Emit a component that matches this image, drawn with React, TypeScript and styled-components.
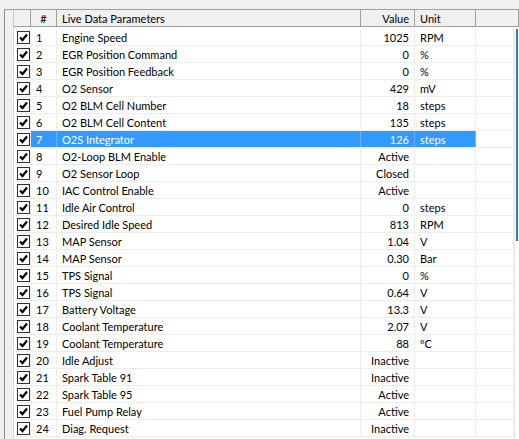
import styled, { createGlobalStyle } from "styled-components";

interface Param {
  name: string;
  value: string;
  unit?: string;
}

const params: Param[] = [
  { name: "Engine Speed", value: "1025", unit: "RPM" },
  { name: "EGR Position Command", value: "0", unit: "%" },
  { name: "EGR Position Feedback", value: "0", unit: "%" },
  { name: "O2 Sensor", value: "429", unit: "mV" },
  { name: "O2 BLM Cell Number", value: "18", unit: "steps" },
  { name: "O2 BLM Cell Content", value: "135", unit: "steps" },
  { name: "O2S Integrator", value: "126", unit: "steps" },
  { name: "O2-Loop BLM Enable", value: "Active" },
  { name: "O2 Sensor Loop", value: "Closed" },
  { name: "IAC Control Enable", value: "Active" },
  { name: "Idle Air Control", value: "0", unit: "steps" },
  { name: "Desired Idle Speed", value: "813", unit: "RPM" },
  { name: "MAP Sensor", value: "1.04", unit: "V" },
  { name: "MAP Sensor", value: "0.30", unit: "Bar" },
  { name: "TPS Signal", value: "0", unit: "%" },
  { name: "TPS Signal", value: "0.64", unit: "V" },
  { name: "Battery Voltage", value: "13.3", unit: "V" },
  { name: "Coolant Temperature", value: "2.07", unit: "V" },
  { name: "Coolant Temperature", value: "88", unit: "ºC" },
  { name: "Idle Adjust", value: "Inactive" },
  { name: "Spark Table 91", value: "Inactive" },
  { name: "Spark Table 95", value: "Active" },
  { name: "Fuel Pump Relay", value: "Active" },
  { name: "Diag. Request", value: "Inactive" },
];

const SELECTED = 6;

const GlobalStyle = createGlobalStyle`
  html, body {
    margin: 0;
    padding: 0;
    background: #f0f0f0;
  }
  body {
    font-family: "Lato", "Liberation Sans", sans-serif;
    font-size: 11px;
    color: #000;
  }
`;

const COLS = "17px 26px 304px 54px 61px 1fr";

const Page = styled.div`
  width: 519px;
  height: 439px;
  overflow: hidden;
  padding: 9px 0 0 4px;
  box-sizing: border-box;
`;

const Frame = styled.div`
  height: 100%;
  border-left: 1px solid #8a8a8a;
  border-top: 1px solid #a0a0a0;
  padding-left: 8px;
  display: flex;
  flex-direction: column;
`;

const Header = styled.div`
  display: grid;
  grid-template-columns: ${COLS};
  height: 16px;
  border-bottom: 1px solid #a0a0a0;
  border-left: 1px solid #c8c8c8;
  background: #f0f0f0;
`;

const HeadCell = styled.div<{ $align?: string }>`
  display: flex;
  align-items: center;
  justify-content: ${({ $align }) => $align ?? "flex-start"};
  padding: 0 5px;
  border-right: 1px solid #a0a0a0;
  white-space: nowrap;
  overflow: hidden;
`;

const Body = styled.div`
  flex: 1;
  display: flex;
  background: #fff;
  border-left: 1px solid #d8d8d8;
  padding-top: 2px;
  overflow: hidden;
`;

const List = styled.div`
  flex: 1;
`;

const ScrollStrip = styled.div`
  width: 4px;
  border-left: 1px solid #e8e8e8;
`;

const ScrollThumb = styled.div`
  height: 212px;
  margin-left: 1px;
  border-left: 2px solid #3a7ca8;
`;

const Row = styled.div`
  display: grid;
  grid-template-columns: ${COLS};
  height: 16px;
  border-bottom: 1px solid #ededed;
`;

const Cell = styled.div<{ $align?: string; $selected?: boolean }>`
  display: flex;
  align-items: center;
  justify-content: ${({ $align }) => $align ?? "flex-start"};
  padding: 0 5px;
  border-right: 1px solid ${({ $selected }) => ($selected ? "#66b3ff" : "#ededed")};
  background: ${({ $selected }) => ($selected ? "#3399ff" : "transparent")};
  color: ${({ $selected }) => ($selected ? "#fff" : "#000")};
  white-space: nowrap;
  overflow: hidden;
`;

const CheckCell = styled.div`
  display: flex;
  align-items: center;
  padding-left: 3px;
  border-right: 1px solid #ededed;
`;

const Box = styled.div`
  width: 11px;
  height: 11px;
  border: 1px solid #333;
  background: #fff;
  display: flex;
  align-items: center;
  justify-content: center;
`;

const Check = () => (
  <Box>
    <svg width="9" height="9" viewBox="0 0 9 9">
      <path d="M1 4.5 L3.5 7 L8 1.5" fill="none" stroke="#000" strokeWidth="2.2" />
    </svg>
  </Box>
);

export default function App() {
  return (
    <>
      <GlobalStyle />
      <Page>
        <Frame>
          <Header>
            <HeadCell />
            <HeadCell $align="center">#</HeadCell>
            <HeadCell>Live Data Parameters</HeadCell>
            <HeadCell $align="flex-end">Value</HeadCell>
            <HeadCell>Unit</HeadCell>
            <HeadCell />
          </Header>
          <Body>
            <List>
              {params.map((p, i) => {
                const sel = i === SELECTED;
                return (
                  <Row key={i}>
                    <CheckCell>
                      <Check />
                    </CheckCell>
                    <Cell $selected={sel}>{i + 1}</Cell>
                    <Cell $selected={sel}>{p.name}</Cell>
                    <Cell $selected={sel} $align="flex-end">
                      {p.value}
                    </Cell>
                    <Cell $selected={sel}>{p.unit ?? ""}</Cell>
                    <Cell />
                  </Row>
                );
              })}
            </List>
            <ScrollStrip>
              <ScrollThumb />
            </ScrollStrip>
          </Body>
        </Frame>
      </Page>
    </>
  );
}
